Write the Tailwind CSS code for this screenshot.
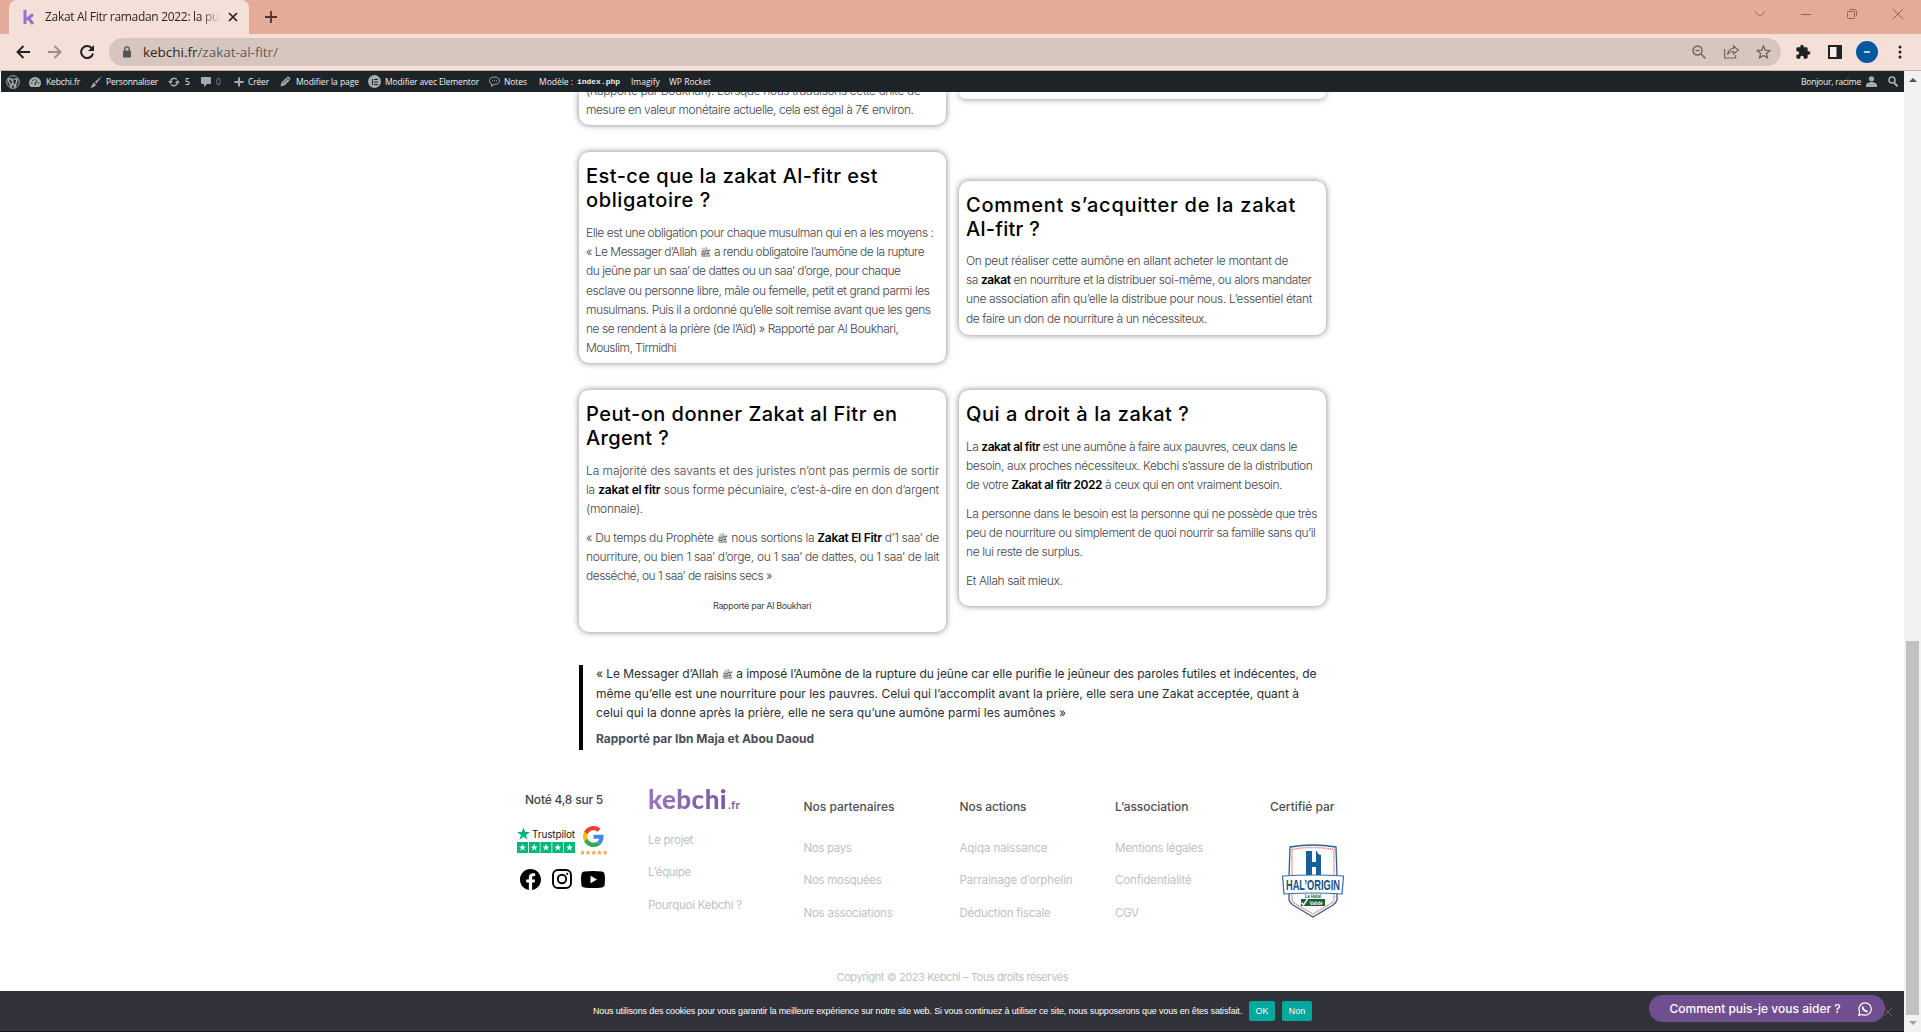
<!DOCTYPE html>
<html lang="fr"><head><meta charset="utf-8"><title>Zakat Al Fitr ramadan 2022</title>
<script src="https://cdn.jsdelivr.net/npm/@tailwindcss/browser@4"></script></head>
<body class="h-[1032px] w-[1921px] overflow-hidden bg-white font-['Inter',sans-serif] flex flex-col">
<header class="shrink-0 relative z-10 h-[92px]">
  <!-- tab strip -->
  <div class="h-[34px] bg-[#e3ab98] flex items-center">
    <div class="ml-[9px] h-[34px] w-[240px] rounded-t-lg bg-[#f5e0d9] flex items-center pl-[14px]">
      <svg class="w-3 h-4 -mt-px shrink-0" viewBox="0 0 12 16"><path d="M2 1v14M10 5.5L3.5 10.5M5.5 9L10 15" fill="none" stroke="#9b72c8" stroke-width="3"/></svg>
      <div class="ml-[10px] w-[175px] overflow-hidden whitespace-nowrap font-['Open_Sans'] text-[12px] leading-[16px] tracking-[-0.31px] text-[#2b2423] [mask-image:linear-gradient(to_right,black_155px,transparent_176px)]">Zakat Al Fitr ramadan 2022: la pu</div>
      <svg class="ml-[8px] w-[10px] h-[10px]" viewBox="0 0 10 10"><path d="M1 1l8 8M9 1l-8 8" stroke="#222" stroke-width="1.7"/></svg>
    </div>
    <svg class="ml-[16px] w-3 h-3" viewBox="0 0 12 12"><path d="M6 0v12M0 6h12" stroke="#4a3531" stroke-width="1.8"/></svg>
    <div class="ml-auto flex items-center text-[#8f6459] -mt-[6px]">
      <svg class="w-[10px] h-[6px]" viewBox="0 0 10 6"><path d="M0 .5l5 5 5-5" fill="none" stroke="currentColor"/></svg>
      <svg class="ml-[36px] w-[10px] h-[10px]" viewBox="0 0 10 10"><path d="M0 5.5h10" stroke="currentColor"/></svg>
      <svg class="ml-[36px] w-[10px] h-[10px]" viewBox="0 0 10 10" fill="none" stroke="currentColor"><rect x=".5" y="2.5" width="7" height="7" rx="1"/><path d="M2.5 .5h5a2 2 0 012 2v5"/></svg>
      <svg class="ml-[36px] mr-[18px] w-[10px] h-[10px]" viewBox="0 0 10 10"><path d="M0 0l10 10M10 0L0 10" stroke="currentColor"/></svg>
    </div>
  </div>
  <!-- toolbar -->
  <div class="h-[37px] bg-[#f5e0d9] border-b border-[#c4b3ac] flex items-center">
    <svg class="ml-[16px] w-[14px] h-[14px]" viewBox="0 0 14 14" fill="none" stroke="#222" stroke-width="1.9"><path d="M14 7H1.5M7.5 1L1.5 7l6 6"/></svg>
    <svg class="ml-[18px] w-[14px] h-[14px]" viewBox="0 0 14 14" fill="none" stroke="#9c8e8a" stroke-width="1.9"><path d="M0 7h12.500M6.500 1l6 6-6 6"/></svg>
    <svg class="ml-[18px] w-[14px] h-[14px]" viewBox="0 0 14 14"><path d="M12 3.500A6 6 0 1 0 13 8.500" fill="none" stroke="#222" stroke-width="2"/><path d="M14 0v6H8z" fill="#222"/></svg>
    <div class="ml-[15px] w-[1672px] h-[28px] rounded-full bg-[#d7c6bf] flex items-center">
      <svg class="ml-[14px] w-[8px] h-[12px] -mt-px" viewBox="0 0 8 12"><path d="M1.800 5V3a2.200 2.200 0 014.400 0v2" fill="none" stroke="#555456" stroke-width="1.300"/><rect y="4.500" width="8" height="7" rx="1" fill="#555456"/></svg>
      <span class="ml-[12px] whitespace-nowrap font-['Open_Sans'] text-[13.500px] leading-[18px] tracking-[-0.03px] text-[#655a58]"><span class="text-[#2c2423]">kebchi.fr</span>/zakat-al-fitr/</span>
      <div class="ml-auto flex items-center text-[#6d6360]">
        <svg class="w-[14px] h-[14px]" viewBox="0 0 14 14" fill="none" stroke="currentColor" stroke-width="1.500"><circle cx="5.500" cy="5.500" r="4.500"/><path d="M9 9l4.500 4.500M3.500 5.500h4"/></svg>
        <svg class="ml-[18px] w-[15px] h-[14px]" viewBox="0 0 15 14" fill="none" stroke="currentColor" stroke-width="1.200"><path d="M.6 4v9h11V10M9.500 1l5 4-5 4V6.500C6 6.500 4.500 8 3.500 9.800 4 6 6 3.800 9.500 3.500z"/></svg>
        <svg class="ml-[17px] mr-[10px] w-[15px] h-[14px]" viewBox="0 0 15 14" fill="none" stroke="currentColor" stroke-width="1.400"><path d="M7.500 1.200l1.800 4 4.400.4-3.300 2.900 1 4.300-3.900-2.300-3.900 2.300 1-4.300L1.300 5.600l4.400-.4z"/></svg>
      </div>
    </div>
    <svg class="ml-[14px] w-[16px] h-[16px]" viewBox="0 0 24 24" fill="#1f2225"><path d="M20.500 11H19V7c0-1.100-.9-2-2-2h-4V3.500a2.500 2.500 0 00-5 0V5H4c-1.100 0-2 .9-2 2v3.800h1.500a2.700 2.700 0 010 5.400H2V20c0 1.100.9 2 2 2h3.800v-1.500a2.700 2.700 0 015.400 0V22H17c1.100 0 2-.9 2-2v-4h1.500a2.500 2.500 0 000-5z"/></svg>
    <svg class="ml-[17px] w-[14px] h-[14px]" viewBox="0 0 14 14"><path d="M0 0h14v14H0z" fill="#1f2225"/><path d="M2 2h6.500v10H2z" fill="#fbeee9"/></svg>
    <div class="ml-[14px] w-[22px] h-[22px] rounded-full bg-[#02599f] flex items-center justify-center"><div class="w-[6px] h-[2px] bg-[#b5d0e8]"></div></div>
    <svg class="ml-[20px] w-[4px] h-[14px]" viewBox="0 0 4 14" fill="#1f2225"><circle cx="2" cy="2" r="1.500"/><circle cx="2" cy="7" r="1.500"/><circle cx="2" cy="12" r="1.500"/></svg>
  </div>
  <!-- WordPress admin bar -->
  <nav class="ml-px h-[21px] w-[1903px] bg-[#1d2327] flex items-center whitespace-nowrap font-['Open_Sans'] text-[8.500px] font-medium leading-[12px] text-[#f0f0f1]">
    <svg class="ml-[5px] w-[14px] h-[14px]" viewBox="0 0 14 14" fill="none" stroke="#a7aaad"><circle cx="7" cy="7" r="6.300"/><path d="M2 4l3.200 8L7 6.500 5.800 3.700M5.200 4L9 12l2.500-8.500M2 4h4M7.500 4h3" stroke-width="1.500"/></svg>
    <svg class="ml-[9px] w-[12px] h-[10px]" viewBox="0 0 12 10"><path d="M1.500 10a6 6 0 119 0z" fill="#a7aaad"/><path d="M5.500 8L8 3.500M2 6h1.300M3.500 3l.8.8M6 2v1M9 6h1.300" stroke="#1d2327" stroke-width="1.100"/></svg>
    <span class="ml-[5px] w-[34px] tracking-[-0.13px]">Kebchi.fr</span>
    <svg class="ml-[10px] w-[12px] h-[12px]" viewBox="0 0 12 12" fill="#a7aaad"><path d="M12 0L6.500 7.500 4.800 6zM4 6.500l2 2C5 11 3 11.500 0 11.500 2 10.500 2 8 4 6.500z"/></svg>
    <span class="ml-[4px] w-[52px] tracking-[-0.17px]">Personnaliser</span>
    <svg class="ml-[10px] w-[12px] h-[10px]" viewBox="0 0 12 10"><path d="M2.500 4.500a3.600 3.600 0 016.300-2M9.500 5.500a3.600 3.600 0 01-6.300 2" fill="none" stroke="#a7aaad" stroke-width="1.500"/><path d="M0 4h5L2.500 7zM7 6h5L9.500 3z" fill="#a7aaad"/></svg>
    <span class="ml-[5px] w-[5px]">5</span>
    <svg class="ml-[11px] w-[10px] h-[10px] mt-px" viewBox="0 0 10 10"><path d="M1 0h8a1 1 0 011 1v5a1 1 0 01-1 1H6L3 10V7H1a1 1 0 01-1-1V1a1 1 0 011-1z" fill="#a7aaad"/></svg>
    <span class="ml-[5px] w-[6px] text-[#8c9094]">0</span>
    <svg class="ml-[12px] w-[10px] h-[10px]" viewBox="0 0 10 10"><path d="M5 .5v9M.5 5h9" stroke="#a7aaad" stroke-width="2"/></svg>
    <span class="ml-[4px] w-[21px] tracking-[-0.17px]">Créer</span>
    <svg class="ml-[11px] w-[11px] h-[11px]" viewBox="0 0 11 11"><path d="M.5 10.500l1-4L7 1q1-1 2.500.5T10 4L4.500 9.500z" fill="#a7aaad"/><path d="M3 7.500l5-5M6.500 1.500l3 3" stroke="#1d2327" stroke-width=".8"/></svg>
    <span class="ml-[5px] w-[63px] tracking-[-0.061px]">Modifier la page</span>
    <div class="ml-[9px] w-[13px] h-[13px] rounded-full bg-[#a7aaad] flex items-center justify-center"><svg class="w-[6px] h-[6px]" viewBox="0 0 6 6"><path d="M.5 0v6M2 .5h4M2 3h4M2 5.500h4" stroke="#1d2327"/></svg></div>
    <span class="ml-[4px] w-[94px] tracking-[-0.118px]">Modifier avec Elementor</span>
    <svg class="ml-[10px] w-[11px] h-[11px]" viewBox="0 0 11 11"><path d="M5.500 1C8.500 1 10.500 2.500 10.500 4.700S8.500 8.400 5.500 8.400L2.500 10.300 3 8C1.500 7.500.5 6.200.5 4.700.5 2.500 2.500 1 5.500 1z" fill="none" stroke="#a7aaad"/><path d="M3 4.800h1M5 4.800h1M7 4.800h1" stroke="#a7aaad"/></svg>
    <span class="ml-[4px] w-[23px] tracking-[-0.075px]">Notes</span>
    <span class="ml-[12px] w-[34px] tracking-[-0.012px]">Modèle :</span>
    <span class="ml-[4px] w-[43px] font-['Liberation_Mono'] font-bold text-[8px] tracking-[-0.024px]">index.php</span>
    <span class="ml-[11px] w-[29px]">Imagify</span>
    <span class="ml-[9px] w-[42px]">WP Rocket</span>
    <span class="ml-auto w-[60px] tracking-[-0.216px]">Bonjour, racime</span>
    <svg class="ml-[5px] w-[11px] h-[11px]" viewBox="0 0 11 11" fill="#a7aaad"><circle cx="5.500" cy="2.800" r="2.600"/><path d="M0 11V8.500Q1.500 6 5.500 6T11 8.500V11z"/></svg>
    <svg class="ml-[11px] mr-[6px] w-[10px] h-[11px]" viewBox="0 0 10 11"><circle cx="4" cy="4" r="3" fill="none" stroke="#a7aaad" stroke-width="1.600"/><path d="M6 6.500l3.500 4" stroke="#a7aaad" stroke-width="2"/></svg>
  </nav>
</header>
<div class="h-[961px] shrink-0 flex -mt-[21px]">
 <main class="w-[1904px] h-[940px] mt-[21px] overflow-hidden flex flex-col">
  <section class="ml-[579px] w-[747px] h-[573px] shrink-0 text-[12px] font-light leading-[19.200px] text-[#3f444b] whitespace-nowrap">
   <div class="flex gap-[13px] items-start h-[60px]">
    <article class="w-[367px] h-[33px] rounded-b-[10px] shadow-[0_0_6px_rgba(0,0,0,0.5)] px-[7px] pb-[6px] flex flex-col justify-end">
      <p class="tracking-[-0.357px]">(Rapporté par Boukhari). Lorsque nous traduisons cette unité de</p>
      <p class="tracking-[-0.447px]">mesure en valeur monétaire actuelle, cela est égal à 7€ environ.</p>
    </article>
    <article class="w-[367px] h-[7px] rounded-b-[10px] shadow-[0_0_6px_rgba(0,0,0,0.5)]"></article>
   </div>
   <div class="flex gap-[13px] items-center h-[211px]">
    <article class="w-[367px] h-[211px] rounded-[10px] shadow-[0_0_6px_rgba(0,0,0,0.5)] px-[7px] pt-[12px]">
      <h2 class="text-[20px] leading-[24px] font-medium text-black mb-[11px]"><span class="block tracking-[0.454px]">Est-ce que la zakat Al-fitr est</span><span class="block tracking-[0.617px]">obligatoire ?</span></h2>
      <p class="tracking-[-0.469px]">Elle est une obligation pour chaque musulman qui en a les moyens :</p>
      <p class="tracking-[-0.51px]">« Le Messager d’Allah <span class="text-[9px] leading-none text-black font-normal">ﷺ</span> a rendu obligatoire l’aumône de la rupture</p>
      <p class="tracking-[-0.48px]">du jeûne par un saa’ de dattes ou un saa’ d’orge, pour chaque</p>
      <p class="tracking-[-0.445px]">esclave ou personne libre, mâle ou femelle, petit et grand parmi les</p>
      <p class="tracking-[-0.455px]">musulmans. Puis il a ordonné qu’elle soit remise avant que les gens</p>
      <p class="tracking-[-0.468px]">ne se rendent à la prière (de l’Aïd) » Rapporté par Al Boukhari,</p>
      <p class="tracking-[-0.544px]">Mouslim, Tirmidhi</p>
    </article>
    <article class="w-[367px] h-[154px] rounded-[10px] shadow-[0_0_6px_rgba(0,0,0,0.5)] px-[7px] pt-[12px]">
      <h2 class="text-[20px] leading-[24px] font-medium text-black mb-[10.500px]"><span class="block tracking-[0.76px]">Comment s’acquitter de la zakat</span><span class="block tracking-[0.269px]">Al-fitr ?</span></h2>
      <p class="tracking-[-0.348px]">On peut réaliser cette aumône en allant acheter le montant de</p>
      <p class="tracking-[-0.411px]">sa <b class="font-semibold text-black">zakat</b> en nourriture et la distribuer soi-même, ou alors mandater</p>
      <p class="tracking-[-0.355px]">une association afin qu’elle la distribue pour nous. L’essentiel étant</p>
      <p class="tracking-[-0.421px]">de faire un don de nourriture à un nécessiteux.</p>
    </article>
   </div>
   <div class="mt-[27px] flex gap-[13px] items-start">
    <article class="w-[367px] h-[242px] rounded-[10px] shadow-[0_0_6px_rgba(0,0,0,0.5)] px-[7px] pt-[12px]">
      <h2 class="text-[20px] leading-[24px] font-medium text-black mb-[10.700px]"><span class="block tracking-[0.5px]">Peut-on donner Zakat al Fitr en</span><span class="block tracking-[0.326px]">Argent ?</span></h2>
      <p class="tracking-[-0.052px]">La majorité des savants et des juristes n’ont pas permis de sortir</p>
      <p class="tracking-[-0.196px]">la <b class="font-semibold text-black">zakat el fitr</b> sous forme pécuniaire, c’est-à-dire en don d’argent</p>
      <p class="tracking-[-0.267px] mb-[9.600px]">(monnaie).</p>
      <p class="tracking-[-0.315px]">« Du temps du Prophète <span class="text-[9px] leading-none text-black font-normal">ﷺ</span> nous sortions la <b class="font-semibold text-black">Zakat El Fitr</b> d’1 saa’ de</p>
      <p class="tracking-[-0.299px]">nourriture, ou bien 1 saa’ d’orge, ou 1 saa’ de dattes, ou 1 saa’ de lait</p>
      <p class="tracking-[-0.507px]">desséché, ou 1 saa’ de raisins secs »</p>
      <p class="tracking-[-0.355px] ml-[127px] mt-[10px] text-[9px] font-normal">Rapporté par Al Boukhari</p>
    </article>
    <article class="w-[367px] h-[216px] rounded-[10px] shadow-[0_0_6px_rgba(0,0,0,0.5)] px-[7px] pt-[12px]">
      <h2 class="text-[20px] leading-[24px] font-medium text-black mb-[10.700px]"><span class="block tracking-[0.578px]">Qui a droit à la zakat ?</span></h2>
      <p class="tracking-[-0.469px]">La <b class="font-semibold text-black">zakat al fitr</b> est une aumône à faire aux pauvres, ceux dans le</p>
      <p class="tracking-[-0.385px]">besoin, aux proches nécessiteux. Kebchi s’assure de la distribution</p>
      <p class="tracking-[-0.444px] mb-[9.400px]">de votre <b class="font-semibold text-black">Zakat al fitr 2022</b> à ceux qui en ont vraiment besoin.</p>
      <p class="tracking-[-0.454px]">La personne dans le besoin est la personne qui ne possède que très</p>
      <p class="tracking-[-0.437px]">peu de nourriture ou simplement de quoi nourrir sa famille sans qu’il</p>
      <p class="tracking-[-0.414px] mb-[9.400px]">ne lui reste de surplus.</p>
      <p class="tracking-[-0.395px]">Et Allah sait mieux.</p>
    </article>
   </div>
  </section>
  <blockquote class="ml-[579px] w-[747px] h-[85px] shrink-0 border-l-4 border-black pl-[13px] text-[12px] leading-[19.300px] text-[#2a2e33] whitespace-nowrap">
    <p class="-mt-[0.700px] tracking-[-0.06px]">« Le Messager d’Allah <span class="text-[9px] leading-none text-black">ﷺ</span> a imposé l’Aumône de la rupture du jeûne car elle purifie le jeûneur des paroles futiles et indécentes, de</p>
    <p class="tracking-[0.013px]">même qu’elle est une nourriture pour les pauvres. Celui qui l’accomplit avant la prière, elle sera une Zakat acceptée, quant à</p>
    <p class="tracking-[0.021px]">celui qui la donne après la prière, elle ne sera qu’une aumône parmi les aumônes »</p>
    <p class="mt-[7px] font-bold text-[#4b4f58]">Rapporté par Ibn Maja et Abou Daoud</p>
  </blockquote>
  <footer class="h-[241px] shrink-0 flex flex-col whitespace-nowrap text-[11.500px] leading-[16px] text-[#bcc1c9]">
   <div class="flex h-[214px]">
    <div class="ml-[516px] w-[132px] pt-[41.500px]">
      <p class="ml-[9px] tracking-[-0.218px] font-medium text-[#3f444b] text-[12px]">Noté 4,8 sur 5</p>
      <div class="mt-[18px] flex">
        <div class="ml-px w-[58px] h-[27px]">
          <div class="flex h-[15px] items-center"><svg class="w-[13px] h-[13px] shrink-0" viewBox="0 0 24 23"><path d="M12 0l2.900 8.800H24l-7.400 5.300L19.400 23 12 17.500 4.600 23l2.800-8.900L0 8.800h9.100z" fill="#00b67a"/></svg><span class="ml-[2px] mt-[2px] text-[10px] leading-[12px] tracking-[-0.136px] text-[#191919]">Trustpilot</span></div>
          <svg class="mt-px w-[58px] h-[11px]" viewBox="0 0 58 11"><g fill="#00b67a"><path d="M0 0h11v11H0zM11.800 0h11v11h-11zM23.500 0h11v11h-11zM35.300 0h11v11h-11zM47 0h11v11H47z"/></g><g fill="#fff"><path id="ts" d="M5.500 1.800l.9 2.600h2.700L6.900 6l.9 2.700-2.300-1.700-2.300 1.700.9-2.700-2.200-1.600h2.700z"/><use href="#ts" x="11.800"/><use href="#ts" x="23.500"/><use href="#ts" x="35.300"/><use href="#ts" x="47"/></g></svg>
        </div>
        <div class="ml-[5px] w-[28px]">
          <svg class="ml-[3px] w-[21px] h-[21px]" viewBox="0 0 48 48"><path fill="#EA4335" d="M24 9.500c3.540 0 6.710 1.220 9.210 3.600l6.850-6.850C35.900 2.380 30.470 0 24 0 14.620 0 6.510 5.380 2.560 13.220l7.980 6.190C12.430 13.720 17.740 9.500 24 9.500z"/><path fill="#4285F4" d="M46.980 24.550c0-1.570-.15-3.090-.38-4.550H24v9.020h12.940c-.58 2.960-2.260 5.480-4.780 7.180l7.730 6c4.510-4.180 7.090-10.360 7.090-17.650z"/><path fill="#FBBC05" d="M10.530 28.590c-.48-1.450-.76-2.990-.76-4.590s.27-3.140.76-4.590l-7.980-6.190C.92 16.460 0 20.120 0 24s.92 7.540 2.560 10.780l7.970-6.190z"/><path fill="#34A853" d="M24 48c6.480 0 11.930-2.130 15.890-5.810l-7.730-6c-2.150 1.450-4.920 2.300-8.160 2.300-6.260 0-11.570-4.220-13.470-9.910l-7.980 6.190C6.510 42.620 14.620 48 24 48z"/></svg>
          <svg class="mt-[3px] w-[28px] h-[5px]" viewBox="0 0 28 5" fill="#f6a33a"><path id="gs" d="M2.500 0l.7 1.700H5L3.600 2.900l.5 2-1.600-1.100L.9 4.900l.5-2L0 1.700h1.800z"/><use href="#gs" x="5.600"/><use href="#gs" x="11.300"/><use href="#gs" x="17"/><use href="#gs" x="22.700"/></svg>
        </div>
      </div>
      <div class="mt-[14px] ml-[4px] flex items-center">
        <svg class="w-[21px] h-[21px]" viewBox="0 0 24 24"><path d="M24 12.070C24 5.400 18.630 0 12 0S0 5.400 0 12.070C0 18.100 4.390 23.090 10.130 24v-8.440H7.080v-3.490h3.050V9.410c0-3.020 1.790-4.690 4.530-4.690 1.310 0 2.680.24 2.680.24v2.970h-1.510c-1.490 0-1.960.93-1.960 1.890v2.250h3.330l-.53 3.490h-2.800V24C19.610 23.090 24 18.100 24 12.070z"/></svg>
        <svg class="ml-[11px] w-[20px] h-[20px]" viewBox="0 0 20 20" fill="none" stroke="#000" stroke-width="1.900"><rect x="1" y="1" width="18" height="18" rx="5"/><circle cx="10" cy="10" r="4.200"/><circle cx="15.200" cy="4.800" r=".5" stroke-width="1.200"/></svg>
        <svg class="ml-[9px] w-[24px] h-[17px]" viewBox="0 0 24 17"><path d="M3 .5q9-1 18 0 2 .3 2.500 2.300.9 5.700 0 11.400-.5 2-2.500 2.300-9 1-18 0-2-.3-2.500-2.300-.9-5.700 0-11.400Q1 .8 3 .5z"/><path d="M9.500 4.800l6.500 3.700-6.500 3.700z" fill="#fff"/></svg>
      </div>
    </div>
    <div class="w-[155.500px] pt-[37px]">
      <div class="h-[24px] flex items-baseline font-['Lato'] leading-[24px]"><span class="w-[79px] font-black text-[26px] tracking-[0.432px] bg-linear-to-r from-[#9a78bf] to-[#7c56a4] bg-clip-text text-transparent">kebchi</span><span class="ml-px text-[12px] font-bold tracking-[0.12px] text-[#8560ab]">.fr</span></div>
      <p class="mt-[21px] tracking-[-0.309px]">Le projet</p><p class="mt-[16px] tracking-[-0.303px]">L’équipe</p><p class="mt-[17px] tracking-[-0.245px]">Pourquoi Kebchi ?</p>
    </div>
    <div class="w-[156px] pt-[49px]"><h3 class="tracking-[-0.013px] font-medium text-[12px] text-[#4b4f58]">Nos partenaires</h3>
      <p class="mt-[24.500px] tracking-[-0.355px]">Nos pays</p><p class="mt-[16px] tracking-[-0.27px]">Nos mosquées</p><p class="mt-[17px] tracking-[-0.218px]">Nos associations</p></div>
    <div class="w-[155.500px] pt-[49px]"><h3 class="tracking-[-0.07px] font-medium text-[12px] text-[#4b4f58]">Nos actions</h3>
      <p class="mt-[24.500px] tracking-[-0.08px]">Aqiqa naissance</p><p class="mt-[16px] tracking-[-0.132px]">Parrainage d’orphelin</p><p class="mt-[17px] tracking-[-0.214px]">Déduction fiscale</p></div>
    <div class="w-[155px] pt-[49px]"><h3 class="tracking-[-0.046px] font-medium text-[12px] text-[#4b4f58]">L’association</h3>
      <p class="mt-[24.500px] tracking-[-0.25px]">Mentions légales</p><p class="mt-[16px] tracking-[-0.141px]">Confidentialité</p><p class="mt-[17px] tracking-[-0.391px]">CGV</p></div>
    <div class="pt-[49px]"><h3 class="tracking-[-0.013px] font-medium text-[12px] text-[#4b4f58]">Certifié par</h3>
      <svg class="mt-[29px] ml-[12px] w-[62px] h-[74px]" viewBox="0 0 62 74"><path d="M8 3Q31-1 54 3l1 29v24q-1 3-4 5L31 73 11 61q-3-2-4-5V32z" fill="#fff" stroke="#2c5f90" stroke-width="1.300"/><path d="M10 5.500q21-4 42 0V56l-2 3-19 11L12 59l-2-3z" fill="none" stroke="#ee8f86" stroke-width="1.500" stroke-dasharray="1.500 .6"/><path d="M24 7h6v11h4V7h1q0 3 4 4v21h-5V23h-4v9h-6z" fill="#17609f"/><path d="M.5 32Q31 30 61.500 32L60 50Q31 48 2 50z" fill="#fff" stroke="#2f6ea8" stroke-width="1.200"/><rect x="19" y="55" width="24" height="7" fill="#17603b"/><path d="M19.500 58.500l2 2.500 4-6" fill="none" stroke="#fff" stroke-width="1.500"/><g text-anchor="middle" font-family="Liberation Sans" font-weight="bold"><text x="31" y="46" font-size="14" textLength="54" lengthAdjust="spacingAndGlyphs" fill="#174f82">HAL’ORIGIN</text><text x="31" y="54" font-size="5" textLength="16" lengthAdjust="spacingAndGlyphs" fill="#17603b">Le Halal</text><text x="34" y="60.500" font-size="5" textLength="13" lengthAdjust="spacingAndGlyphs" fill="#fff">Validé</text></g></svg></div>
   </div>
   <p class="ml-[836.500px] mt-[4.500px] text-[11px] tracking-[-0.410px]">Copyright © 2023 Kebchi – Tous droits réservés</p>
  </footer>
  <div class="h-[41px] shrink-0 bg-[#32323a] border-b border-[#14141c] flex items-center whitespace-nowrap font-['Liberation_Sans'] text-[9px] leading-[12px] text-white relative">
    <span class="ml-[593px] w-[649px] tracking-[-0.15px]">Nous utilisons des cookies pour vous garantir la meilleure expérience sur notre site web. Si vous continuez à utiliser ce site, nous supposerons que vous en êtes satisfait.</span>
    <span class="ml-[7px] w-[26px] h-[20px] rounded-[2px] bg-[#00a99d] flex items-center justify-center">OK</span>
    <span class="ml-[7px] w-[30px] h-[20px] rounded-[2px] bg-[#00a99d] flex items-center justify-center">Non</span>
    <svg class="absolute left-[1884px] top-[17px] w-[8px] h-[8px]" viewBox="0 0 8 8"><path d="M0 0l8 8M8 0L0 8" stroke="#65656c"/></svg>
    <div class="absolute left-[1649px] top-[4px] w-[236px] h-[27px] rounded-full bg-[#704f90] flex items-center font-['Inter'] text-[12px] font-medium"><span class="ml-[20.500px] w-[171px]">Comment puis-je vous aider ?</span>
      <svg class="ml-[17.500px] w-[14px] h-[14px]" viewBox="0 0 14 14" fill="none" stroke="#fff"><path d="M.7 13.300l1-3.300A6.200 6.200 0 117 13.200a6.300 6.300 0 01-2.900-.8z" stroke-width="1.200"/><path d="M4.600 4.300Q4.400 6.500 6 8t3.700 1.600" stroke-width="1.800"/></svg></div>
  </div>
 </main>
 <!-- scrollbar -->
 <div class="w-[17px] h-[961px] bg-[#f1f1f1] flex flex-col items-center">
   <div class="mt-[7px] w-0 h-0 border-x-4 border-x-transparent border-b-4 border-b-[#505050]"></div>
   <div class="mt-[559px] w-[13px] h-[374px] bg-[#c1c1c1]"></div>
   <div class="mt-[6px] w-0 h-0 border-x-4 border-x-transparent border-t-4 border-t-[#a0a0a0]"></div>
 </div>
</div>
</body></html>
